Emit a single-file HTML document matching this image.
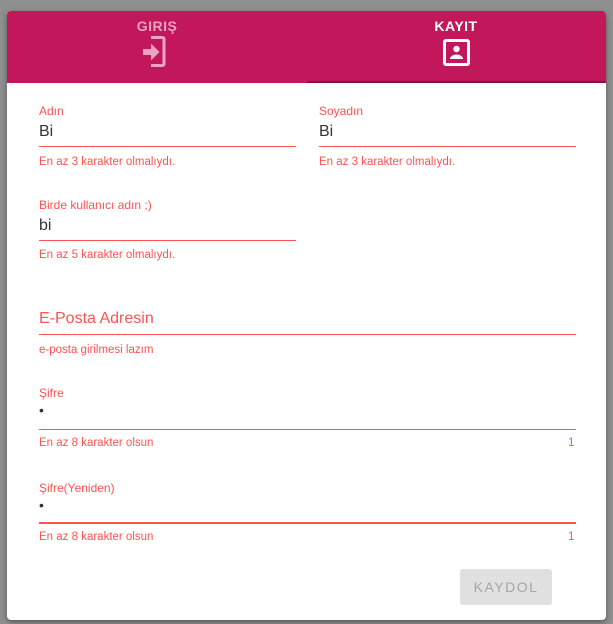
<!DOCTYPE html>
<html><head><meta charset="utf-8">
<style>
*{margin:0;padding:0;box-sizing:border-box}
body{width:613px;height:624px;background:#8f8f8f;position:relative;overflow:hidden;font-family:"Liberation Sans",sans-serif}
.card{position:absolute;left:7px;top:11px;width:599px;height:609px;background:#fff;border-radius:4px;overflow:hidden;box-shadow:0 2px 6px rgba(0,0,0,.4)}
.hdr{position:absolute;left:0;top:0;width:599px;height:72px;background:#c2185b}
.ind{position:absolute;left:300px;top:70px;width:299px;height:2px;background:#8a0f47}
.tab{position:absolute;top:7px;font-size:14px;font-weight:bold;letter-spacing:.5px;text-align:center;width:120px}
.a{position:absolute;white-space:nowrap}
.lbl{font-size:12px;color:#ff5252}
.val{font-size:16px;color:#333}
.err{font-size:11.5px;color:#ff5252}
.ln{position:absolute;height:1px;background:#ff5252}
.btn{position:absolute;left:453px;top:558px;width:92px;height:36px;background:#e0e0e0;border-radius:3px;color:#a6a6a6;font-size:14px;letter-spacing:1.5px;text-align:center;line-height:36px}
</style></head><body>
<div class="card">
<div class="hdr"></div>
<div class="ind"></div>
<div class="tab" style="left:90px;color:#eba3c4">GIRIŞ</div>
<div class="tab" style="left:389px;color:#fff">KAYIT</div>
<svg class="a" style="left:134px;top:25px" width="32" height="32" viewBox="0 0 32 32">
<path d="M10 1.5h11.5a1.5 1.5 0 0 1 1.5 1.5v25a1.5 1.5 0 0 1-1.5 1.5H10" fill="none" stroke="#eba3c4" stroke-width="3"/>
<path d="M2 13h8V7.5l8.5 8.5-8.5 8.5V19H2z" fill="#eba3c4"/>
</svg>
<svg class="a" style="left:436px;top:28px" width="27" height="27" viewBox="0 0 27 27">
<rect x="1.5" y="1.5" width="24" height="24" rx="1.5" fill="none" stroke="#fff" stroke-width="3"/>
<circle cx="13.5" cy="10" r="3.2" fill="#fff"/>
<path d="M7 20c0-3 4-4.5 6.5-4.5S20 17 20 20z" fill="#fff"/>
</svg>

<div class="a lbl" style="left:32px;top:93px">Adın</div>
<div class="a val" style="left:32px;top:112px">Bi</div>
<div class="ln" style="left:32px;top:135px;width:257px"></div>
<div class="a err" style="left:32px;top:145px">En az 3 karakter olmalıydı.</div>

<div class="a lbl" style="left:312px;top:93px">Soyadın</div>
<div class="a val" style="left:312px;top:112px">Bi</div>
<div class="ln" style="left:312px;top:135px;width:257px"></div>
<div class="a err" style="left:312px;top:145px">En az 3 karakter olmalıydı.</div>

<div class="a lbl" style="left:32px;top:187px">Birde kullanıcı adın ;)</div>
<div class="a val" style="left:32px;top:206px">bi</div>
<div class="ln" style="left:32px;top:229px;width:257px"></div>
<div class="a err" style="left:32px;top:238px">En az 5 karakter olmalıydı.</div>

<div class="a" style="left:32px;top:299px;font-size:16px;color:#ff5252">E-Posta Adresin</div>
<div class="ln" style="left:32px;top:323px;width:537px"></div>
<div class="a err" style="left:32px;top:333px">e-posta girilmesi lazım</div>

<div class="a lbl" style="left:32px;top:375px">Şifre</div>
<div class="a val" style="left:32px;top:391px;font-size:14px">•</div>
<div class="ln" style="left:32px;top:418px;width:537px"></div>
<div class="a err" style="left:32px;top:426px">En az 8 karakter olsun</div>
<div class="a err" style="left:561px;top:426px">1</div>

<div class="a lbl" style="left:32px;top:470px">Şifre(Yeniden)</div>
<div class="a val" style="left:32px;top:486px;font-size:14px">•</div>
<div class="ln" style="left:32px;top:511px;width:537px;height:2px"></div>
<div class="a err" style="left:32px;top:520px">En az 8 karakter olsun</div>
<div class="a err" style="left:561px;top:520px">1</div>

<div class="btn">KAYDOL</div>
</div>
</body></html>
